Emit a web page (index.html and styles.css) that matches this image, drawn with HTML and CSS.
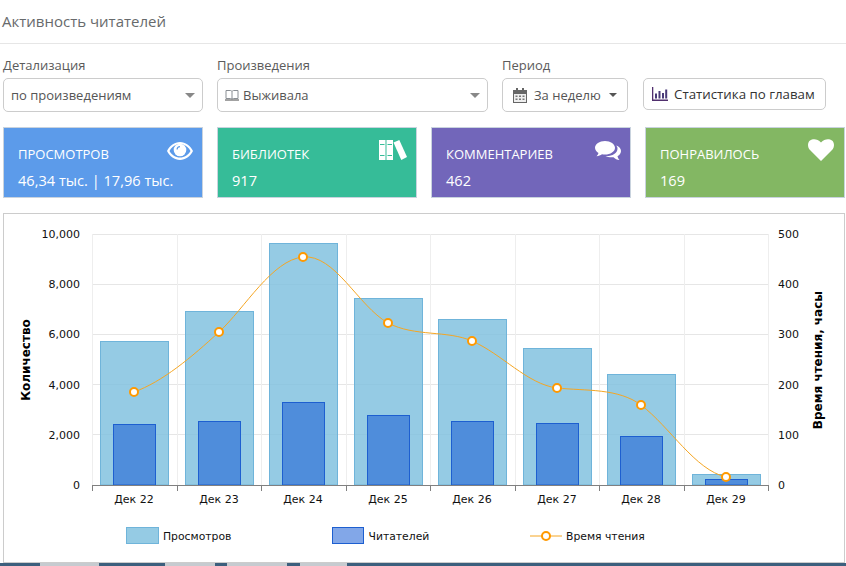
FILE: index.html
```html
<!DOCTYPE html>
<html lang="ru">
<head>
<meta charset="utf-8">
<title>Активность читателей</title>
<link rel="stylesheet" href="styles.css">
</head>
<body>
<header class="page-head"><h1 class="page-title">Активность читателей</h1></header>

<section class="filters">
  <div class="field field-detail">
    <label class="field-label">Детализация</label>
    <div class="select"><span class="select-text">по произведениям</span><i class="caret"></i></div>
  </div>
  <div class="field field-works">
    <label class="field-label">Произведения</label>
    <div class="select select-works">
      <svg class="book-icon" width="14" height="12" viewBox="0 0 14 12"><path d="M1 1.500h4.500c.8 0 1.200.4 1.500 1 .3-.6.7-1 1.500-1H13v8H8.500c-.7 0-1.200.2-1.500.7-.3-.5-.8-.7-1.500-.7H1z" fill="none" stroke="#8a8f94"/><path d="M7 2.500v7.500" stroke="#8a8f94"/><path d="M0 10.500h14v1H0z" fill="#444"/></svg>
      <span class="select-text">Выживала</span><i class="caret"></i>
    </div>
  </div>
  <div class="field field-period">
    <label class="field-label">Период</label>
    <div class="select select-period">
      <svg class="cal-icon" width="14" height="15" viewBox="0 0 14 15"><path d="M0 2h14v13H0z" fill="#666"/><path d="M1 6h12v8H1z" fill="#eee"/><path d="M3 0h2v3.500H3zM9 0h2v3.500H9z" fill="#666"/><path d="M2.500 7.500h2v1.500h-2zM6 7.500h2v1.500H6zM9.500 7.500h2v1.500h-2zM2.500 10.500h2V12h-2zM6 10.500h2V12H6zM9.500 10.500h2V12h-2z" fill="#777"/></svg>
      <span class="select-text">За неделю</span><i class="caret caret-small"></i>
    </div>
  </div>
  <button class="stats-btn" type="button">
    <svg class="bars-icon" width="16" height="14" viewBox="0 0 16 14"><path d="M0 0h1.300v12.600H16V14H0z" fill="#512f6e"/><path d="M3 6.500h2v5H3zM6.500 4h2v7.500h-2zM10 6h2v5.500h-2zM13.200 2.500h2v9h-2z" fill="#4a3a78"/></svg>
    <span>Статистика по главам</span>
  </button>
</section>

<section class="cards">
  <article class="card card-blue">
    <div class="card-title">ПРОСМОТРОВ</div>
    <div class="card-value">46,34 тыс. | 17,96 тыс.</div>
    <svg class="card-icon icon-eye" width="26" height="18" viewBox="0 0 26 18"><path fill-rule="evenodd" d="M13 0C7.500 0 2.800 3.500 0 9c2.800 5.500 7.500 9 13 9s10.200-3.500 13-9c-2.800-5.500-7.500-9-13-9zM13 2c-1 0-2 .2-3 .6C6.800 3.500 4 6 2.500 9c2.300 4 6 6.500 10.500 6.500S21.200 13 23.500 9C22 6 19.200 3.500 16 2.600 15 2.200 14 2 13 2z" fill="#fff"/><circle cx="13" cy="8" r="6.300" fill="#fff"/><path d="M9.500 7.500a3.500 3.500 0 0 1 3.500-3.500v1.200a2.300 2.300 0 0 0-2.300 2.300z" fill="#5c9be8"/></svg>
  </article>
  <article class="card card-green">
    <div class="card-title">БИБЛИОТЕК</div>
    <div class="card-value">917</div>
    <svg class="card-icon icon-books" width="28" height="20" viewBox="0 0 28 20"><path d="M0 0h6.500v20H0zM7.500 0H14v20H7.500z" fill="#fff"/><path d="M1 4h4.500v1H1zM8.500 4H13v1H8.500zM1 15h4.500v1H1zM8.500 15H13v1H8.500z" fill="#36bc98"/><path d="M14.500 2.500 20.300 0 28 17l-5.700 3z" fill="#fff"/></svg>
  </article>
  <article class="card card-purple">
    <div class="card-title">КОММЕНТАРИЕВ</div>
    <div class="card-value">462</div>
    <svg class="card-icon icon-comments" width="26" height="21" viewBox="0 0 26 21"><path d="M10 0c5.500 0 10 3 10 6.800s-4.500 6.800-10 6.800c-1 0-2-.1-3-.3-1.500 1.200-3.300 1.700-5.500 1.900 1-.9 1.700-2 2-3.300C1.600 11 0 9 0 6.800 0 3 4.500 0 10 0z" fill="#fff"/><path d="M21.500 4.500c2.700 1.200 4.500 3.200 4.500 5.500 0 2.200-1.400 4-3.500 5.200.2 1.300.9 2.600 2 3.800-2.500-.2-4.500-1.200-6-2.800-.6.100-1.300.1-2 .1-2.300 0-4.400-.5-6-1.400 6 .5 12-2.500 12-7.500 0-.9-.3-1.700-1-2.400z" fill="#fff"/></svg>
  </article>
  <article class="card card-lime">
    <div class="card-title">ПОНРАВИЛОСЬ</div>
    <div class="card-value">169</div>
    <svg class="card-icon icon-heart" width="26" height="22" viewBox="0 0 26 22"><path d="M13 22 2 11C-.7 8-.6 3.500 2 1.500 5-.7 9.500-.3 13 3.500 16.500-.3 21-.7 24 1.500c2.600 2 2.700 6.500 0 9.500z" fill="#fff"/></svg>
  </article>
</section>

<section class="chart-panel">
  <svg class="chart" width="840" height="348" viewBox="4 214 840 348">
    <g class="grid">
      <path d="M92 234.500H768M92 284.500H768M92 334.500H768M92 384.500H768M92 434.500H768"/>
      <path class="grid-v" d="M92.500 234V485M177.500 234V485M261.500 234V485M346.500 234V485M430.500 234V485M515.500 234V485M599.500 234V485M684.500 234V485M768.500 234V485"/>
    </g>
    <g class="bars-views">
      <rect x="100.500" y="341.500" width="68" height="143.500"/>
      <rect x="185.500" y="311.500" width="68" height="173.500"/>
      <rect x="269.500" y="243.500" width="68" height="241.500"/>
      <rect x="354.500" y="298.500" width="68" height="186.500"/>
      <rect x="438.500" y="319.500" width="68" height="165.500"/>
      <rect x="523.500" y="348.500" width="68" height="136.500"/>
      <rect x="607.500" y="374.500" width="68" height="110.500"/>
      <rect x="692.500" y="474.500" width="68" height="10.500"/>
    </g>
    <g class="bars-readers">
      <rect x="113.500" y="424.500" width="42" height="60.500"/>
      <rect x="198.500" y="421.500" width="42" height="63.500"/>
      <rect x="282.500" y="402.500" width="42" height="82.500"/>
      <rect x="367.500" y="415.500" width="42" height="69.500"/>
      <rect x="451.500" y="421.500" width="42" height="63.500"/>
      <rect x="536.500" y="423.500" width="42" height="61.500"/>
      <rect x="620.500" y="436.500" width="42" height="48.500"/>
      <rect x="705.500" y="479.500" width="42" height="5.500"/>
    </g>
    <path class="axis" d="M92 485.500H769M92.500 485V491M177.500 485V491M261.500 485V491M346.500 485V491M430.500 485V491M515.500 485V491M599.500 485V491M684.500 485V491M768.500 485V491"/>
    <path class="series-line" d="M134 392C162 382 192 357 219 332C245 308 272 260 303 257C335 254 358 306 388 323C415 337 447 330 472 341C502 354 527 384 557 388C586 391 618 388 641 405C670 427 695 470 726 477"/>
    <g class="markers">
      <circle cx="134" cy="392" r="4"/><circle cx="219" cy="332" r="4"/><circle cx="303" cy="257" r="4"/><circle cx="388" cy="323" r="4"/><circle cx="472" cy="341" r="4"/><circle cx="557" cy="388" r="4"/><circle cx="641" cy="405" r="4"/><circle cx="726" cy="477" r="4"/>
    </g>
    <g class="tick-left">
      <text x="80" y="238">10,000</text><text x="80" y="288">8,000</text><text x="80" y="338">6,000</text><text x="80" y="389">4,000</text><text x="80" y="439">2,000</text><text x="80" y="489">0</text>
    </g>
    <g class="tick-right">
      <text x="778" y="238">500</text><text x="778" y="288">400</text><text x="778" y="338">300</text><text x="778" y="389">200</text><text x="778" y="439">100</text><text x="778" y="489">0</text>
    </g>
    <g class="tick-bottom">
      <text x="134" y="503">Дек 22</text><text x="219" y="503">Дек 23</text><text x="303" y="503">Дек 24</text><text x="388" y="503">Дек 25</text><text x="472" y="503">Дек 26</text><text x="557" y="503">Дек 27</text><text x="641" y="503">Дек 28</text><text x="726" y="503">Дек 29</text>
    </g>
    <text class="axis-title" transform="translate(30 360) rotate(-90)">Количество</text>
    <text class="axis-title" transform="translate(822 360) rotate(-90)">Время чтения, часы</text>
    <rect class="legend-views" x="126.500" y="527.500" width="32" height="16"/>
    <text class="legend-text" x="163" y="540">Просмотров</text>
    <rect class="legend-readers" x="332.500" y="527.500" width="31" height="16"/>
    <text class="legend-text" x="368.500" y="540">Читателей</text>
    <path class="series-line" d="M530 536H562"/>
    <circle class="legend-marker" cx="546" cy="536" r="4"/>
    <text class="legend-text" x="566" y="540">Время чтения</text>
  </svg>
</section>

<footer class="taskbar"></footer>
</body>
</html>
```
FILE: styles.css
```css
* { box-sizing: border-box; }
html, body { margin: 0; padding: 0; }
body {
  width: 846px;
  height: 566px;
  overflow: hidden;
  background: #fff;
  color: #555;
  font-family: "Open Sans", "Noto Sans", sans-serif;
  font-size: 13px;
  display: flex;
  flex-direction: column;
}
.page-head {
  height: 44px;
  padding: 11px 2px 0;
  border-bottom: 1px solid #e6e6e6;
}
.page-title {
  margin: 0;
  font-size: 15px;
  line-height: 20px;
  font-weight: 400;
  color: #676a6c;
}
.filters {
  display: flex;
  align-items: flex-start;
  padding: 13px 0 0 3px;
  height: 83px;
}
.field { display: flex; flex-direction: column; }
.field-detail { width: 200px; margin-right: 14px; }
.field-works { width: 271px; margin-right: 14px; }
.field-period { width: 126px; margin-right: 15px; }
.field-label {
  height: 21px;
  line-height: 16px;
  font-size: 13px;
  color: #5b5b5b;
}
.select {
  height: 34px;
  display: flex;
  align-items: center;
  padding: 0 7px;
  border: 1px solid #ccc;
  border-radius: 5px;
  background: #fff;
  color: #555;
}
.select-text { flex: 1; line-height: 20px; font-size: 13px; }
.book-icon { margin-right: 4px; }
.select-period { padding: 0 10px; }
.cal-icon { margin-right: 7px; }
.caret {
  width: 0;
  height: 0;
  border-left: 5px solid transparent;
  border-right: 5px solid transparent;
  border-top: 5px solid #888;
}
.caret-small { border-left-width: 4.500px; border-right-width: 4.500px; border-top-width: 4px; border-top-color: #555; }
.stats-btn {
  margin-top: 21px;
  width: 183px;
  height: 32px;
  display: flex;
  align-items: center;
  padding: 0 0 0 8px;
  border: 1px solid #ccc;
  border-radius: 5px;
  background: #fff;
  font-family: inherit;
  font-size: 13.300px;
  color: #333;
}
.bars-icon { margin-right: 6px; }
.cards {
  display: flex;
  gap: 14px;
  padding: 0 0 0 3px;
  height: 86px;
}
.card {
  position: relative;
  width: 200px;
  height: 71px;
  padding: 16px 14px 0;
  border: 1px solid #c9d3de;
  color: #fff;
}
.card-title { height: 26px; line-height: 20px; font-size: 13px; }
.card-value { line-height: 20px; font-size: 14.600px; }
.card-blue { background: #5c9bea; }
.card-green { background: #36bc98; }
.card-purple { background: #7266ba; }
.card-lime { background: #83b763; }
.card-icon { position: absolute; }
.icon-eye { right: 9px; top: 14px; }
.icon-books { right: 9px; top: 12px; }
.icon-comments { right: 9px; top: 13px; }
.icon-heart { right: 10px; top: 11px; }
.chart-panel {
  width: 842px;
  height: 350px;
  margin-left: 3px;
  border: 1px solid #ccc;
  background: #fff;
}
.chart { display: block; }
.chart text { font-family: "DejaVu Sans", sans-serif; font-size: 11px; fill: #111; }
.chart .legend-text { font-size: 10.800px; }
.grid path { stroke: #e6e6e6; fill: none; }
.grid .grid-v { stroke: #eeeeee; }
.bars-views rect, .legend-views { fill: #7fc0df; fill-opacity: .83; stroke: #6fb4da; }
.bars-readers rect { fill: #4f8ddb; stroke: #1d5fd0; }
.legend-readers { fill: #82a7e8; stroke: #1d5fd0; }
.axis { stroke: #808080; fill: none; }
.series-line { fill: none; stroke: #f5a623; stroke-width: 1; }
.markers circle, .legend-marker { fill: #fff; stroke: #f90; stroke-width: 2; }
.tick-left text { text-anchor: end; }
.tick-bottom text { text-anchor: middle; }
.chart .axis-title { font-size: 12px; font-weight: 700; text-anchor: middle; fill: #000; }
.taskbar {
  flex: 1;
  background: linear-gradient(90deg, #3c5f7d 40px, #c6cbd0 40px, #c6cbd0 99px, #3c5f7d 99px, #3c5f7d 165px, #c6cbd0 165px, #c6cbd0 215px, #3c5f7d 215px, #3c5f7d 227px, #c6cbd0 227px, #c6cbd0 287px, #3c5f7d 287px, #3c5f7d 300px, #c6cbd0 300px, #c6cbd0 347px, #3c5f7d 347px);
}
```
